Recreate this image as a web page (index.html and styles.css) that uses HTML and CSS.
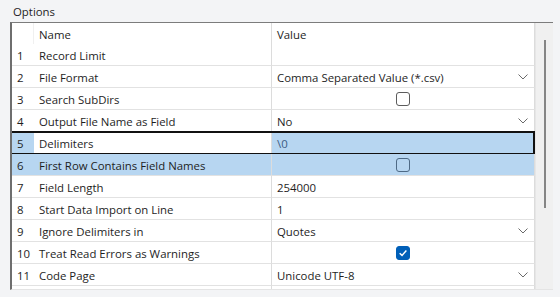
FILE: index.html
```html
<!DOCTYPE html>
<html lang="en">
  <head>
    <meta charset="UTF-8" />
    <title>Options</title>
    <link rel="stylesheet" href="styles.css">
  </head>
  <body>
    <div class="panel">
      <div class="panel-title">Options</div>
      <div class="grid">
        <div class="table">
          <div class="row header">
            <div class="cell num"></div>
            <div class="cell name">Name</div>
            <div class="cell value">Value</div>
          </div>
          <div class="row">
            <div class="cell num">1</div>
            <div class="cell name">Record Limit</div>
            <div class="cell value"></div>
          </div>
          <div class="row">
            <div class="cell num">2</div>
            <div class="cell name">File Format</div>
            <div class="cell value combo">Comma Separated Value (*.csv)<svg class="chevron" viewBox="0 0 10 6"><polyline points="0.5,0.5 5,5 9.5,0.5" /></svg></div>
          </div>
          <div class="row">
            <div class="cell num">3</div>
            <div class="cell name">Search SubDirs</div>
            <div class="cell value check"><span class="box"></span></div>
          </div>
          <div class="row">
            <div class="cell num">4</div>
            <div class="cell name">Output File Name as Field</div>
            <div class="cell value combo">No<svg class="chevron" viewBox="0 0 10 6"><polyline points="0.5,0.5 5,5 9.5,0.5" /></svg></div>
          </div>
          <div class="row current">
            <div class="cell num">5</div>
            <div class="cell name">Delimiters</div>
            <div class="cell value edit">\0</div>
          </div>
          <div class="row selected">
            <div class="cell num">6</div>
            <div class="cell name">First Row Contains Field Names</div>
            <div class="cell value check"><span class="box"></span></div>
          </div>
          <div class="row">
            <div class="cell num">7</div>
            <div class="cell name">Field Length</div>
            <div class="cell value">254000</div>
          </div>
          <div class="row">
            <div class="cell num">8</div>
            <div class="cell name">Start Data Import on Line</div>
            <div class="cell value">1</div>
          </div>
          <div class="row">
            <div class="cell num">9</div>
            <div class="cell name">Ignore Delimiters in</div>
            <div class="cell value combo">Quotes<svg class="chevron" viewBox="0 0 10 6"><polyline points="0.5,0.5 5,5 9.5,0.5" /></svg></div>
          </div>
          <div class="row">
            <div class="cell num">10</div>
            <div class="cell name">Treat Read Errors as Warnings</div>
            <div class="cell value check"><span class="box checked"><svg viewBox="0 0 10 10"><polyline points="2.2,5.2 4.2,7 7.8,3" /></svg></span></div>
          </div>
          <div class="row">
            <div class="cell num">11</div>
            <div class="cell name">Code Page</div>
            <div class="cell value combo">Unicode UTF-8<svg class="chevron" viewBox="0 0 10 6"><polyline points="0.5,0.5 5,5 9.5,0.5" /></svg></div>
          </div>
          <div class="row">
            <div class="cell num"></div>
            <div class="cell name"></div>
            <div class="cell value"></div>
          </div>
        </div>
        <div class="scrollbar">
          <div class="thumb"></div>
        </div>
      </div>
    </div>
  </body>
</html>
```

FILE: styles.css
```css
body {
  margin: 0;
  background: #f3f4f6;
  font-family: "Open Sans", "Noto Sans", sans-serif;
  font-size: 11.4px;
  color: #1e1e1e;
}

.panel {
  padding: 3px 0 0 10px;
  width: 543px;
}

.panel-title {
  height: 19px;
  line-height: 17px;
  padding-left: 3px;
}

.grid {
  display: flex;
  height: 268px;
  overflow: hidden;
  border-top: 1px solid #7c7c7c;
  border-left: 2px solid #6e6e6e;
  border-bottom: 1px solid #e4e4e4;
  box-sizing: border-box;
}

.table {
  flex: 1;
  background: #fff;
}

.row {
  display: grid;
  grid-template-columns: 22px 237px 264px;
  height: 22px;
  position: relative;
}

.cell {
  box-sizing: border-box;
  height: 22px;
  line-height: 21px;
  padding: 1px 0 0 5px;
  border-bottom: 1px solid #e2e2e2;
  white-space: nowrap;
  overflow: hidden;
}

.cell.num {
  padding-left: 5px;
}

.cell.value {
  border-left: 1px solid #dcdcdc;
  border-right: 1px solid #dcdcdc;
  display: flex;
  align-items: center;
}

.header {
  height: 21px;
}

.header .cell {
  height: 21px;
  line-height: 18px;
  padding-top: 3px;
  border-bottom: none;
  align-items: flex-start;
}

.header .num {
  border-right: 1px solid #f0f0f0;
}

.combo {
  justify-content: space-between;
  padding-right: 6px;
}

.chevron {
  width: 10px;
  height: 6px;
  fill: none;
  stroke: #6a6a6a;
  stroke-width: 1;
}

.check {
  justify-content: center;
  padding-left: 0;
}

.box {
  width: 12px;
  height: 12px;
  border: 1px solid #5c5c5c;
  border-radius: 3px;
  background: #fff;
  display: flex;
}

.box.checked {
  background: #005fb8;
  border-color: #005fb8;
}

.box svg {
  width: 12px;
  height: 12px;
  fill: none;
  stroke: #fff;
  stroke-width: 1.2;
}

.current .num,
.current .value {
  background: #b7d6f1;
}

.current .edit {
  color: #3b5c84;
}

.current::after {
  content: "";
  position: absolute;
  left: -2px;
  top: -1px;
  right: 0;
  bottom: -1px;
  border: 2px solid #111;
  pointer-events: none;
}

.selected .cell {
  background: #b7d6f1;
}

.selected .box {
  background: #b7d6f1;
  border-color: #4e6a86;
}

.scrollbar {
  width: 18px;
  background: #f0f0f0;
  border-left: 1px solid #e6e6e6;
  position: relative;
}

.thumb {
  position: absolute;
  left: 8px;
  top: 17px;
  width: 2px;
  height: 168px;
  background: #858585;
}
```
